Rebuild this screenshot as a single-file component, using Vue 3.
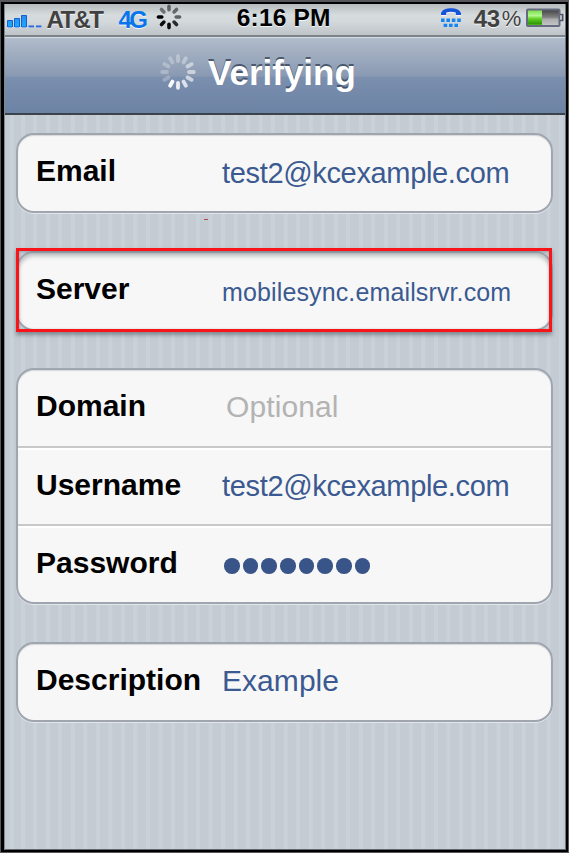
<script setup>
const email = 'test2@kcexample.com'
const groups = [
  { rows: [{ label: 'Email', value: email }] },
  { marked: true, rows: [{ label: 'Server', value: 'mobilesync.emailsrvr.com', kind: 'small' }] },
  {
    rows: [
      { label: 'Domain', value: 'Optional', kind: 'placeholder' },
      { label: 'Username', value: email },
      { label: 'Password', dots: 8 },
    ],
  },
  { rows: [{ label: 'Description', value: 'Example', kind: 'name' }] },
]
const statusSpokes = [0.5, 0.5, 0.55, 0.8, 0.95, 0.95, 1, 0.45]
const navSpokes = [0.3, 0.34, 0.5, 0.55, 0.62, 0.75, 0.85, 0.95, 0.25, 0.27, 0.27, 0.27]
</script>

<template>
  <div class="device">
    <header class="status">
      <svg class="signal" width="37" height="24" viewBox="0 0 37 24">
        <path d="M0 21h6v2H0zM7 21h6v2H7zM14 21h6v2h-6zM21.500 21h5.500v2h-5.500zM29 21h5.500v2H29z" fill="#fff" />
        <g fill="url(#sig)" stroke="#155fcf" stroke-width="1">
          <path d="M.5 15.500h5v6.500h-5zM7.500 13.500h5v8.500h-5zM14.500 10.500h5v11.500h-5z" />
        </g>
        <path d="M21.500 20.500h5.500v2h-5.500zM29 20.500h5.500v2H29z" fill="#2567d8" />
        <defs>
          <linearGradient id="sig" x1="0" y1="0" x2="0" y2="1">
            <stop offset="0" stop-color="#2b8af0" />
            <stop offset="1" stop-color="#16adff" />
          </linearGradient>
        </defs>
      </svg>
      <span class="carrier">AT&amp;T</span>
      <span class="network">4G</span>
      <svg class="busy" width="26" height="26" viewBox="-13 -13 26 26">
        <line v-for="(o, i) in statusSpokes" :key="i" y1="-7.200" y2="-10.600" stroke="#000" stroke-width="3.600" stroke-linecap="round" :opacity="o" :transform="`rotate(${i * 45})`" />
      </svg>
      <span class="clock">6:16 PM</span>
      <svg class="tty" width="22" height="22" viewBox="0 0 22 22">
        <path d="M1 8.300V5.500C3.500 1.800 6.600 1 11 1s7.500.8 10 4.500v2.800h-5.500V5.600C12.700 4.400 9.300 4.400 6.500 5.600v2.700z" fill="#fff" opacity=".7" />
        <path d="M1 7V5C3 1.200 6.600.3 11 .3S19 1.200 21 5v2h-5.200V4.600c-3-1.200-6.600-1.200-9.600 0V7z" fill="#1553db" />
        <path d="M1 12.200h20M3.600 17.400h15" stroke="#1684f3" stroke-width="3.400" stroke-dasharray="3.600 1.800" />
      </svg>
      <span class="percent">43</span><span class="sign">%</span>
      <svg class="battery" width="38" height="20" viewBox="0 0 38 20">
        <defs>
          <linearGradient id="green" x1="0" y1="0" x2="0" y2="1">
            <stop offset="0" stop-color="#79d94b" /><stop offset=".35" stop-color="#b2f98d" />
            <stop offset=".55" stop-color="#62cf27" /><stop offset=".85" stop-color="#329b08" /><stop offset="1" stop-color="#69d432" />
          </linearGradient>
          <linearGradient id="empty" x1="0" y1="0" x2="0" y2="1">
            <stop offset="0" stop-color="#444" /><stop offset=".5" stop-color="#888" />
            <stop offset=".55" stop-color="#aaa" /><stop offset="1" stop-color="#c9c9c9" />
          </linearGradient>
        </defs>
        <rect x="1" y="2" width="32" height="16" fill="url(#empty)" />
        <rect x="1" y="2" width="15" height="16" fill="url(#green)" />
        <rect x="1" y="1.500" width="32.500" height="16.500" rx="1" fill="none" stroke="#646b80" stroke-width="2" />
        <path d="M34 6.500h2.700v6H34" fill="#bcc2c8" stroke="#4c5365" stroke-width="1.600" />
      </svg>
    </header>
    <nav class="nav">
      <svg class="spinner" width="38" height="38" viewBox="-19 -19 38 38">
        <line v-for="(o, i) in navSpokes" :key="i" y1="-11" y2="-15.800" stroke="#fff" stroke-width="3.800" stroke-linecap="round" :opacity="o" :transform="`rotate(${i * 30})`" />
      </svg>
      <h1 class="title">Verifying</h1>
    </nav>
    <main class="content">
      <section v-for="(g, i) in groups" :key="i" class="card" :class="{ marked: g.marked }">
        <div v-for="r in g.rows" :key="r.label" class="row">
          <span class="label">{{ r.label }}</span>
          <span v-if="r.dots" class="dots"><i v-for="n in r.dots" :key="n" class="dot"></i></span>
          <span v-else class="value" :class="r.kind">{{ r.value }}</span>
        </div>
      </section>
      <i class="speck"></i>
    </main>
  </div>
</template>

<style>
body { background: #55575b; }
</style>

<style scoped>
.device {
  box-sizing: border-box;
  width: 569px;
  height: 853px;
  display: flex;
  flex-direction: column;
  border: solid #000;
  border-width: 4px 3px 3px 4px;
  background: repeating-linear-gradient(90deg, #c4cbd3 0 4.500px, #cad2d9 5px 8.500px, #c4cbd3 9px 12.520px);
  background-position: 12px 0;
  background-origin: padding-box;
  font-family: "Liberation Sans", Arial, sans-serif;
  position: relative;
}
.device::before {
  content: "";
  position: absolute;
  inset: -4px -3px -3px -4px;
  border: 1px solid #55575b;
  border-top-width: 2px;
  z-index: 2;
}
.device::after {
  content: "";
  position: absolute;
  inset: 0;
  box-shadow: inset 1px 0 #7f8992, inset -1px 0 #6b7680, inset 0 -1px #62676d;
}
.status {
  box-sizing: border-box;
  height: 33px;
  flex: none;
  display: flex;
  align-items: flex-start;
  background: linear-gradient(#b6bcbe, #d6dbdd 35%, #d4dadc 55%, #bdc3c8);
  border-bottom: 2px solid #7b8288;
  color: #414141;
  font-weight: bold;
  white-space: nowrap;
  text-shadow: 0 1px rgba(255, 255, 255, .8);
}
.status > * { flex: none; }
.signal { margin: 1px 0 0 3px; }
.carrier { width: 67px; margin: 2px 0 0 2.500px; font-size: 24px; line-height: 27px; letter-spacing: -1.6px; }
.network { width: 34px; margin: 2px 0 0 5px; font-size: 24px; line-height: 27px; letter-spacing: -2.600px; color: #0875ed; }
.busy { margin-left: 3.300px; }
.clock { width: 100px; margin: 0 0 0 55px; font-size: 24.500px; line-height: 28px; letter-spacing: .15px; color: #000; }
.tty { margin: 4px 0 0 103.500px; }
.percent { width: 27px; margin: 1px 0 0 11.500px; font-size: 24px; line-height: 27px; letter-spacing: -.5px; }
.sign { width: 20px; margin: 1px 0 0 1px; font-size: 22px; line-height: 27px; font-weight: normal; }
.battery { margin: 4px 0 0 4px; }
.nav {
  box-sizing: border-box;
  height: 78px;
  flex: none;
  display: flex;
  align-items: flex-start;
  padding-left: 155px;
  border-top: 1px solid #d5dce5;
  border-bottom: 2px solid #3b444b;
  background: linear-gradient(#b1bccb, #8999b2 51%, #7b8fae 52%, #6c83a5);
}
.spinner { flex: none; margin-top: 15px; }
.title {
  margin: 14px 0 0 11px;
  color: #fff;
  font-size: 35px;
  line-height: 42px;
  text-shadow: 0 -2px rgba(54, 68, 87, .8);
}
.content {
  display: flex;
  flex-direction: column;
  gap: 37.500px;
  padding: 18px 13px 0 12px;
  position: relative;
}
.card {
  box-sizing: border-box;
  border: 2px solid #9fa6af;
  border-radius: 18px;
  background: #f7f7f7;
  box-shadow: 0 1px #e2e6ea, inset 0 1px 1px #d6d7d9;
  position: relative;
}
.card.marked { box-shadow: inset 0 3px 4px #b9bcbe; }
.marked::after {
  content: "";
  position: absolute;
  inset: -4.600px -1px -3.400px -2px;
  border: 3px solid #f91419;
  box-shadow: 0 3px 4px rgba(70, 80, 90, .55), inset 0 1px 3px rgba(70, 80, 90, .4);
}
.row {
  box-sizing: border-box;
  height: 76px;
  display: grid;
  grid-template-columns: 186px 1fr;
  padding-left: 18px;
  line-height: 38px;
  white-space: nowrap;
}
.row + .row { height: 78px; border-top: 2px solid #c7c8ca; box-shadow: inset 0 2px #fff; }
.label { padding-top: 17px; font-size: 30px; font-weight: bold; color: #000; }
.row + .row .label { padding-top: 18px; }
.value { padding-top: 19px; font-size: 29px; letter-spacing: -.34px; color: #3b5a91; }
.value.small { font-size: 25px; letter-spacing: .13px; padding-top: 20px; }
.value.placeholder { padding: 18px 0 0 4px; font-size: 30px; color: #b3b3b3; letter-spacing: .1px; }
.value.name { padding-top: 18px; font-size: 30px; letter-spacing: .05px; }
.dots { display: flex; gap: 3.200px; padding: 32px 0 0 2px; }
.dot { width: 15.500px; height: 15.500px; border-radius: 50%; background: #385488; }
.speck { position: absolute; left: 200px; top: 104px; width: 4px; height: 1px; background: #a94b50; }
</style>
